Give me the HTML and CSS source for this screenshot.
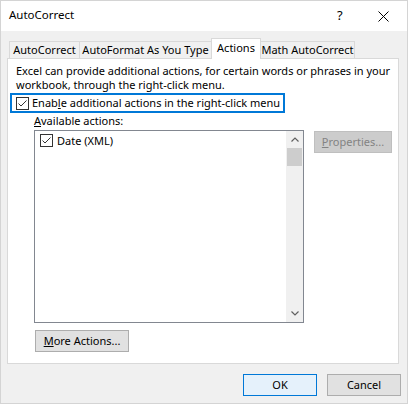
FILE: index.html
```html
<!DOCTYPE html>
<html>
<head>
<meta charset="utf-8">
<link rel="stylesheet" href="styles.css">
</head>
<body>
<div class="window">
  <div class="titlebar">
    <span class="title">AutoCorrect</span>
    <span class="help">?</span>
    <span class="close"><svg width="11" height="11" viewBox="0 0 11 11"><path d="M0.5 0.5 L10.5 10.5 M10.5 0.5 L0.5 10.5" stroke="#000" stroke-width="1" fill="none"/></svg></span>
  </div>
  <div class="client">
    <div class="tabs">
      <div class="tab t1">AutoCorrect</div>
      <div class="tab t2">AutoFormat As You Type</div>
      <div class="tab t3 active">Actions</div>
      <div class="tab t4">Math AutoCorrect</div>
    </div>
    <div class="panel">
      <p class="desc">Excel can provide additional actions, for certain words or phrases in your<br>workbook, through the right-click menu.</p>
      <div class="focusbox">
        <svg class="cb" width="13" height="13" viewBox="0 0 13 13"><rect x="0.5" y="0.5" width="12" height="12" fill="#fff" stroke="#333"/><path d="M2.5 6.5 L5 9 L10.5 3.5" stroke="#333" stroke-width="1" fill="none"/></svg>
        <span class="cbtext">Enab<u>l</u>e additional actions in the right-click menu</span>
      </div>
      <div class="label"><u>A</u>vailable actions:</div>
      <div class="listrow">
        <div class="list">
          <div class="items">
            <div class="item">
              <svg class="cb" width="13" height="13" viewBox="0 0 13 13"><rect x="0.5" y="0.5" width="12" height="12" fill="#fff" stroke="#333"/><path d="M2.5 6.5 L5 9 L10.5 3.5" stroke="#333" stroke-width="1" fill="none"/></svg>
              <span class="itemtext">Date (XML)</span>
            </div>
          </div>
          <div class="scrollbar">
            <div class="arrow"><svg width="8" height="5" viewBox="0 0 8 5"><path d="M0.5 4.5 L4 1 L7.5 4.5" stroke="#606060" stroke-width="1.2" fill="none"/></svg></div>
            <div class="thumb"></div>
            <div class="track"></div>
            <div class="arrow"><svg width="8" height="5" viewBox="0 0 8 5"><path d="M0.5 0.5 L4 4 L7.5 0.5" stroke="#606060" stroke-width="1.2" fill="none"/></svg></div>
          </div>
        </div>
        <button class="btn disabled props"><u>P</u>roperties...</button>
      </div>
      <button class="btn more"><u>M</u>ore Actions...</button>
    </div>
    <div class="footer">
      <button class="btn ok">OK</button>
      <button class="btn cancel">Cancel</button>
    </div>
  </div>
</div>
</body>
</html>
```

FILE: styles.css
```css
* { box-sizing: border-box; }
html, body { margin: 0; padding: 0; }
body {
  font-family: "Noto Sans", "Open Sans", sans-serif;
  font-size: 11px;
  color: #000;
  background: #f0f0f0;
}
.window {
  width: 408px;
  height: 404px;
  border: 1px solid #d4d4d4;
  background: #f0f0f0;
  display: flex;
  flex-direction: column;
}
.titlebar {
  height: 30px;
  background: #fff;
  display: flex;
  align-items: flex-start;
  padding-left: 8px;
}
.title {
  flex: 1;
  font-size: 11.5px;
  line-height: 14px;
  padding-top: 7px;
}
.help {
  font-size: 13px;
  line-height: 14px;
  margin-top: 7px;
  width: 8px;
}
.close {
  margin-left: 33px;
  margin-right: 18px;
  margin-top: 10px;
  height: 11px;
  display: flex;
}
.client {
  flex: 1;
  padding: 7px 6px 0 6px;
  display: flex;
  flex-direction: column;
}
.tabs {
  height: 20px;
  display: flex;
  align-items: flex-end;
  padding-left: 2px;
}
.tab {
  height: 17px;
  border: 1px solid #d9d9d9;
  border-bottom: none;
  background: #f0f0f0;
  line-height: 15px;
  text-align: center;
  white-space: nowrap;
  margin-left: -1px;
}
.t1 { width: 71px; margin-left: 0; }
.t2 { width: 133px; }
.t3 { width: 50px; }
.t4 { width: 95px; }
.tab.active {
  height: 21px;
  background: #fff;
  margin-bottom: -1px;
  padding-top: 1px;
  position: relative;
  z-index: 1;
}
.panel {
  width: 392px;
  height: 306px;
  background: #fff;
  border: 1px solid #d9d9d9;
  padding: 5px 0 0 2px;
  display: flex;
  flex-direction: column;
  align-items: flex-start;
}
.desc {
  margin: 0 0 0 6px;
  line-height: 14px;
  white-space: nowrap;
}
.focusbox {
  margin-top: 1px;
  height: 20px;
  border: 2px solid #0078d7;
  display: flex;
  align-items: center;
  padding: 0 3px 0 4px;
  white-space: nowrap;
}
.cb { display: block; flex: none; }
.cbtext {
  margin-left: 3px;
  line-height: 16px;
}
.label {
  margin-left: 24px;
  line-height: 15px;
}
.listrow {
  margin-top: 2px;
  margin-left: 24px;
  display: flex;
  align-items: flex-start;
}
.list {
  width: 270px;
  height: 193px;
  border: 1px solid #828790;
  display: flex;
}
.items {
  flex: 1;
  padding: 2px 0 0 5px;
}
.item {
  display: flex;
  align-items: center;
  height: 15px;
}
.itemtext {
  margin-left: 4px;
  line-height: 15px;
}
.scrollbar {
  width: 17px;
  background: #f0f0f0;
  display: flex;
  flex-direction: column;
}
.arrow {
  height: 17px;
  display: flex;
  align-items: center;
  justify-content: center;
}
.arrow svg { display: block; }
.thumb {
  height: 18px;
  margin: 0 1px;
  background: #cdcdcd;
}
.track { flex: 1; }
.btn {
  font-family: inherit;
  font-size: 11px;
  color: #000;
  height: 22px;
  padding: 0;
  border: 1px solid #adadad;
  background: #e1e1e1;
  line-height: 18px;
  text-align: center;
  white-space: nowrap;
}
.btn.disabled {
  background: #cccccc;
  border-color: #bfbfbf;
  color: #838383;
}
.props {
  width: 78px;
  margin-top: 1px;
  margin-left: 10px;
}
.more {
  width: 94px;
  margin-top: 7px;
  margin-left: 25px;
}
.footer {
  margin-top: 10px;
  display: flex;
  justify-content: flex-end;
  gap: 10px;
}
.ok, .cancel { width: 74px; }
.ok {
  background: #e5f1fb;
  border-color: #0078d7;
}
```
